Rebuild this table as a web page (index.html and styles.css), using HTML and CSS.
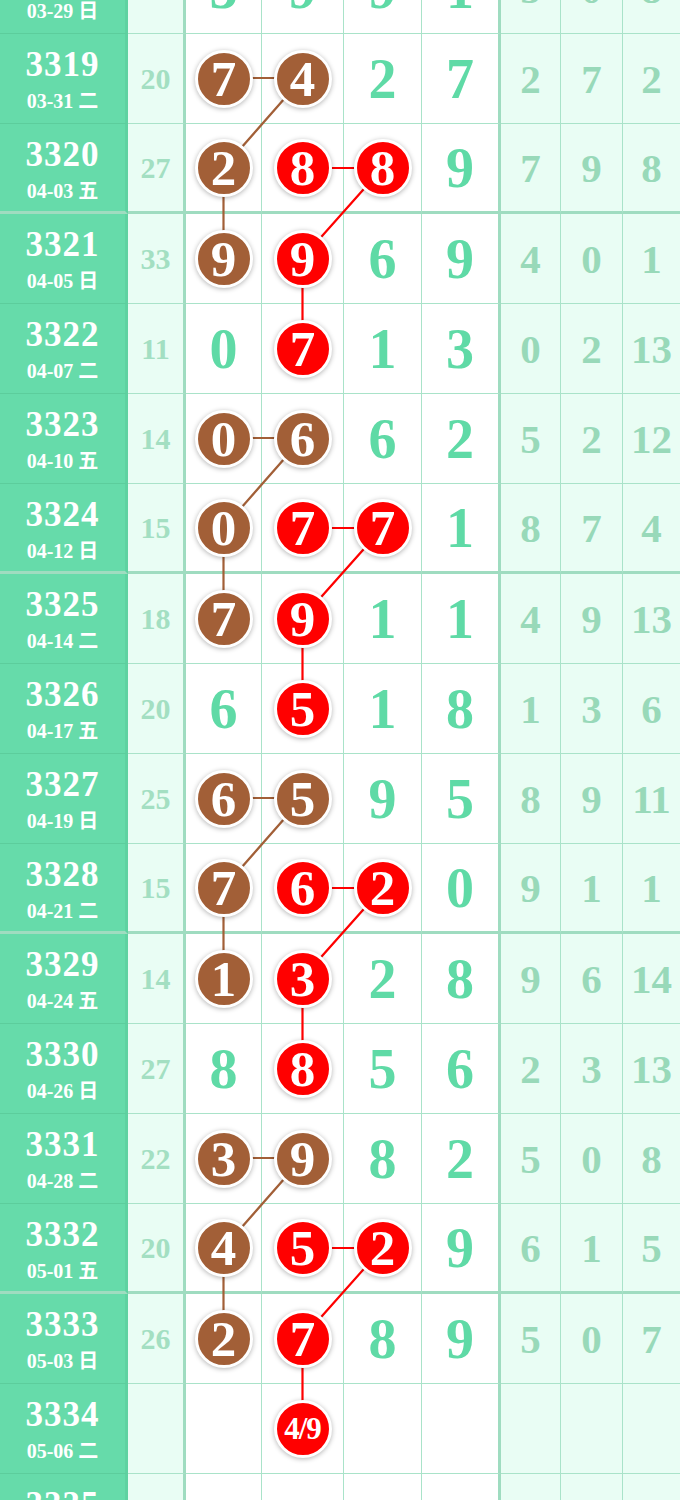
FILE: index.html
```html
<!DOCTYPE html>
<html lang="zh-CN">
<head>
    <meta charset="UTF-8">
    <meta name="viewport" content="width=device-width, initial-scale=1.0">
    <title>走势图</title>
    <link rel="stylesheet" href="styles.css">
</head>
<body>
    <div class="chart">
        <div class="row">
            <div class="qi"><b>3318</b><i>03-29 日</i></div>
            <div class="sum">11</div>
            <div class="c">3</div><div class="c">9</div><div class="c">9</div><div class="c c4">1</div>
            <div class="r">5</div><div class="r">0</div><div class="r r3">8</div>
        </div>
        <div class="row">
            <div class="qi"><b>3319</b><i>03-31 二</i></div>
            <div class="sum">20</div>
            <div class="c"><span class="ball brown">7</span></div><div class="c"><span class="ball brown">4</span></div><div class="c">2</div><div class="c c4">7</div>
            <div class="r">2</div><div class="r">7</div><div class="r r3">2</div>
        </div>
        <div class="row end">
            <div class="qi"><b>3320</b><i>04-03 五</i></div>
            <div class="sum">27</div>
            <div class="c"><span class="ball brown">2</span></div><div class="c"><span class="ball red">8</span></div><div class="c"><span class="ball red">8</span></div><div class="c c4">9</div>
            <div class="r">7</div><div class="r">9</div><div class="r r3">8</div>
        </div>
        <div class="row">
            <div class="qi"><b>3321</b><i>04-05 日</i></div>
            <div class="sum">33</div>
            <div class="c"><span class="ball brown">9</span></div><div class="c"><span class="ball red">9</span></div><div class="c">6</div><div class="c c4">9</div>
            <div class="r">4</div><div class="r">0</div><div class="r r3">1</div>
        </div>
        <div class="row">
            <div class="qi"><b>3322</b><i>04-07 二</i></div>
            <div class="sum">11</div>
            <div class="c">0</div><div class="c"><span class="ball red">7</span></div><div class="c">1</div><div class="c c4">3</div>
            <div class="r">0</div><div class="r">2</div><div class="r r3">13</div>
        </div>
        <div class="row">
            <div class="qi"><b>3323</b><i>04-10 五</i></div>
            <div class="sum">14</div>
            <div class="c"><span class="ball brown">0</span></div><div class="c"><span class="ball brown">6</span></div><div class="c">6</div><div class="c c4">2</div>
            <div class="r">5</div><div class="r">2</div><div class="r r3">12</div>
        </div>
        <div class="row end">
            <div class="qi"><b>3324</b><i>04-12 日</i></div>
            <div class="sum">15</div>
            <div class="c"><span class="ball brown">0</span></div><div class="c"><span class="ball red">7</span></div><div class="c"><span class="ball red">7</span></div><div class="c c4">1</div>
            <div class="r">8</div><div class="r">7</div><div class="r r3">4</div>
        </div>
        <div class="row">
            <div class="qi"><b>3325</b><i>04-14 二</i></div>
            <div class="sum">18</div>
            <div class="c"><span class="ball brown">7</span></div><div class="c"><span class="ball red">9</span></div><div class="c">1</div><div class="c c4">1</div>
            <div class="r">4</div><div class="r">9</div><div class="r r3">13</div>
        </div>
        <div class="row">
            <div class="qi"><b>3326</b><i>04-17 五</i></div>
            <div class="sum">20</div>
            <div class="c">6</div><div class="c"><span class="ball red">5</span></div><div class="c">1</div><div class="c c4">8</div>
            <div class="r">1</div><div class="r">3</div><div class="r r3">6</div>
        </div>
        <div class="row">
            <div class="qi"><b>3327</b><i>04-19 日</i></div>
            <div class="sum">25</div>
            <div class="c"><span class="ball brown">6</span></div><div class="c"><span class="ball brown">5</span></div><div class="c">9</div><div class="c c4">5</div>
            <div class="r">8</div><div class="r">9</div><div class="r r3">11</div>
        </div>
        <div class="row end">
            <div class="qi"><b>3328</b><i>04-21 二</i></div>
            <div class="sum">15</div>
            <div class="c"><span class="ball brown">7</span></div><div class="c"><span class="ball red">6</span></div><div class="c"><span class="ball red">2</span></div><div class="c c4">0</div>
            <div class="r">9</div><div class="r">1</div><div class="r r3">1</div>
        </div>
        <div class="row">
            <div class="qi"><b>3329</b><i>04-24 五</i></div>
            <div class="sum">14</div>
            <div class="c"><span class="ball brown">1</span></div><div class="c"><span class="ball red">3</span></div><div class="c">2</div><div class="c c4">8</div>
            <div class="r">9</div><div class="r">6</div><div class="r r3">14</div>
        </div>
        <div class="row">
            <div class="qi"><b>3330</b><i>04-26 日</i></div>
            <div class="sum">27</div>
            <div class="c">8</div><div class="c"><span class="ball red">8</span></div><div class="c">5</div><div class="c c4">6</div>
            <div class="r">2</div><div class="r">3</div><div class="r r3">13</div>
        </div>
        <div class="row">
            <div class="qi"><b>3331</b><i>04-28 二</i></div>
            <div class="sum">22</div>
            <div class="c"><span class="ball brown">3</span></div><div class="c"><span class="ball brown">9</span></div><div class="c">8</div><div class="c c4">2</div>
            <div class="r">5</div><div class="r">0</div><div class="r r3">8</div>
        </div>
        <div class="row end">
            <div class="qi"><b>3332</b><i>05-01 五</i></div>
            <div class="sum">20</div>
            <div class="c"><span class="ball brown">4</span></div><div class="c"><span class="ball red">5</span></div><div class="c"><span class="ball red">2</span></div><div class="c c4">9</div>
            <div class="r">6</div><div class="r">1</div><div class="r r3">5</div>
        </div>
        <div class="row">
            <div class="qi"><b>3333</b><i>05-03 日</i></div>
            <div class="sum">26</div>
            <div class="c"><span class="ball brown">2</span></div><div class="c"><span class="ball red">7</span></div><div class="c">8</div><div class="c c4">9</div>
            <div class="r">5</div><div class="r">0</div><div class="r r3">7</div>
        </div>
        <div class="row">
            <div class="qi"><b>3334</b><i>05-06 二</i></div>
            <div class="sum"></div>
            <div class="c"></div><div class="c"><span class="ball red small">4/9</span></div><div class="c"></div><div class="c c4"></div>
            <div class="r"></div><div class="r"></div><div class="r r3"></div>
        </div>
        <div class="row">
            <div class="qi"><b>3335</b><i>05-08 五</i></div>
            <div class="sum"></div>
            <div class="c"></div><div class="c"></div><div class="c"></div><div class="c c4"></div>
            <div class="r"></div><div class="r"></div><div class="r r3"></div>
        </div>

        <!-- 连线 -->
        <svg class="lines" width="680" height="1620" viewBox="0 0 680 1620">
            <g id="grp" fill="none" stroke-width="2.2">
                <polyline stroke="#a25f37" points="223.5,134 302.5,134 223.5,224 223.5,314"/>
                <polyline stroke="#ff0000" points="302.5,224 382.5,224 302.5,314 302.5,404"/>
            </g>
            <use href="#grp" y="360"/>
            <use href="#grp" y="720"/>
            <use href="#grp" y="1080"/>
        </svg>
    </div>
</body>
</html>
```

FILE: styles.css
```css
body {
    margin: 0;
    padding: 0;
    background-color: #fff;
    font-family: "Liberation Serif", "Noto Sans CJK SC", serif;
    font-weight: bold;
    overflow: hidden;
}
.chart {
    position: relative;
    margin-top: -56px;
    width: 680px;
}
.row {
    display: grid;
    grid-template-columns: 128px 58px 76px 82px 78px 79px 60px 62px 57px;
    height: 90px;
}
.row > div {
    box-sizing: border-box;
    border-bottom: 1px solid #a9e3c9;
    border-right: 1px solid #a9e3c9;
    display: flex;
    align-items: center;
    justify-content: center;
}
.row.end > div {
    border-bottom: 3px solid #9fdcc0;
}
.row > .qi {
    background-color: #66dbaa;
    border-right: 3px solid #5fd2a1;
    border-bottom-color: #5ccd9c;
    flex-direction: column;
    justify-content: flex-start;
    padding-top: 13px;
    color: #fff;
}
.qi b {
    font-size: 35px;
    line-height: 36px;
    letter-spacing: 1px;
}
.qi i {
    font-style: normal;
    font-size: 20px;
    line-height: 20px;
    margin-top: 8px;
}
.row > .sum {
    background-color: #e9fdf4;
    border-right: 3px solid #9fdcc0;
    color: #a3dfc2;
    font-size: 30px;
}
.c {
    color: #5fdaa6;
    font-size: 56px;
}
.row > .c4 {
    border-right: 3px solid #9fdcc0;
}
.r {
    background-color: #e9fdf4;
    color: #98d9b9;
    font-size: 41px;
}
.row > .r3 {
    border-right: none;
}
.ball {
    position: relative;
    z-index: 2;
    width: 52px;
    height: 52px;
    border: 3px solid #fff;
    border-radius: 50%;
    box-shadow: 0 1px 5px rgba(0, 0, 0, 0.3);
    color: #fff;
    font-size: 51px;
    line-height: 52px;
    text-align: center;
}
.brown {
    background-color: #a25f37;
}
.red {
    background-color: #ff0000;
}
.ball.small {
    font-size: 31px;
    letter-spacing: -1px;
}
.lines {
    position: absolute;
    top: 0;
    left: 0;
    z-index: 1;
}
```
